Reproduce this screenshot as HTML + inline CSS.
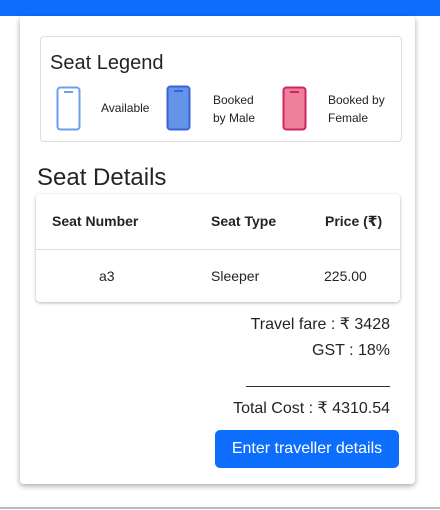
<!DOCTYPE html>
<html><head><meta charset="utf-8"><style>
*{margin:0;padding:0;box-sizing:border-box}
body{width:440px;height:510px;background:#fff;font-family:"Liberation Sans","DejaVu Sans",sans-serif;color:#212529;position:relative;overflow:hidden}
.top{position:absolute;left:0;top:0;width:440px;height:16px;background:#0d6efd}
.card{position:absolute;left:20px;top:16px;width:395px;height:468px;background:#fff;border-radius:4px;box-shadow:0 2px 6px rgba(0,0,0,.35)}
.legend{position:absolute;left:40px;top:36px;width:362px;height:106px;border:1px solid #ddd;border-radius:4px}
.abs{position:absolute}
.lt{font-size:12px;line-height:18px;color:#222}
.tbl{position:absolute;left:36px;top:194px;width:364px;height:108px;background:#fff;border-radius:4px;box-shadow:0 1px 3px rgba(0,0,0,.3)}
.th{font-weight:bold;font-size:14px}
.td{font-size:14px}
.r{position:absolute;right:50px;font-size:16px;text-align:right;white-space:nowrap}
.btn{position:absolute;left:215px;top:430px;width:184px;height:38px;background:#0d6efd;color:#fff;border-radius:5px;font-size:16px;line-height:38px;text-align:center}
.bl{position:absolute;left:0;top:507px;width:440px;height:2px;background:#bbb}
</style></head><body>
<div class="top"></div>
<div class="card"></div>
<div class="legend"></div>
<div class="abs" style="left:50px;top:52px;font-size:20px">Seat Legend</div>
<svg class="abs" style="left:56px;top:86px" width="26" height="46"><rect x="1.5" y="1.5" width="22" height="42" rx="3" fill="#fff" stroke="#6f9ef0" stroke-width="2"/><rect x="8" y="5" width="9" height="2" fill="#6f9ef0"/></svg>
<div class="abs lt" style="left:101px;top:99px">Available</div>
<svg class="abs" style="left:166px;top:85px" width="26" height="47"><rect x="1.5" y="1.5" width="22" height="43" rx="3" fill="#6394ea" stroke="#3b62d6" stroke-width="2"/><rect x="8" y="5" width="9" height="2" fill="#3b62d6"/></svg>
<div class="abs lt" style="left:213px;top:91px">Booked<br>by Male</div>
<svg class="abs" style="left:282px;top:86px" width="26" height="46"><rect x="1.5" y="1.5" width="22" height="42" rx="3" fill="#ee7f9b" stroke="#d0245a" stroke-width="2"/><rect x="8" y="5" width="9" height="2" fill="#d0245a"/></svg>
<div class="abs lt" style="left:328px;top:91px">Booked by<br>Female</div>
<div class="abs" style="left:37px;top:164px;font-size:24px">Seat Details</div>
<div class="tbl">
<div class="abs" style="left:0;top:55px;width:364px;height:1px;background:#ddd"></div>
<div class="abs th" style="left:16px;top:19px">Seat Number</div>
<div class="abs th" style="left:175px;top:19px">Seat Type</div>
<div class="abs th" style="left:289px;top:19px">Price (₹)</div>
<div class="abs td" style="left:63px;top:74px">a3</div>
<div class="abs td" style="left:175px;top:74px">Sleeper</div>
<div class="abs td" style="left:288px;top:74px">225.00</div>
</div>
<div class="r" style="top:314px">Travel fare : ₹ 3428</div>
<div class="r" style="top:342px">GST : 18%</div>
<div class="abs" style="left:246px;top:386px;width:144px;height:1px;background:#333"></div>
<div class="r" style="top:398px">Total Cost : ₹ 4310.54</div>
<div class="btn">Enter traveller details</div>
<div class="bl"></div>
</body></html>
